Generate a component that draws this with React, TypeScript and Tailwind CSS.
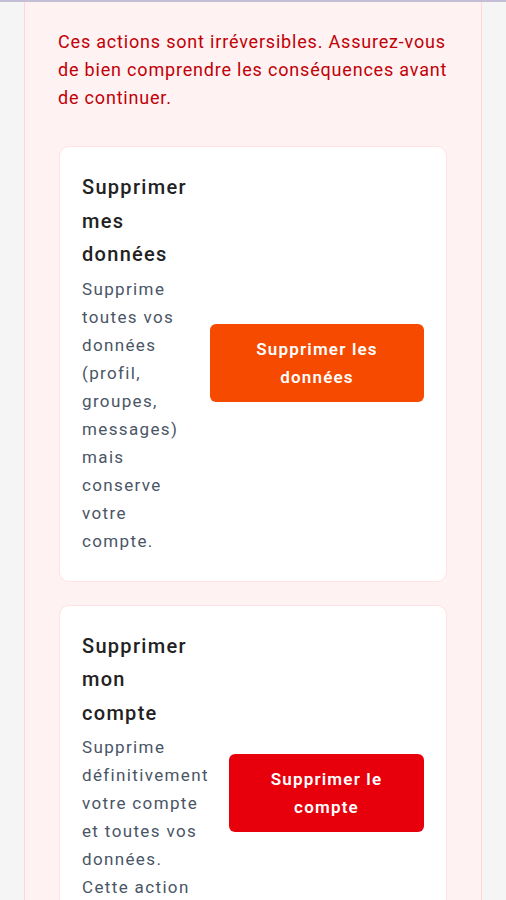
const cards = [
  {
    title: 'Supprimer mes données',
    desc: 'Supprime toutes vos données (profil, groupes, messages) mais conserve votre compte.',
    label: 'Supprimer les données',
    btn: 'w-[214px] bg-[#f54a00]',
  },
  {
    title: 'Supprimer mon compte',
    desc: 'Supprime définitivement votre compte et toutes vos données. Cette action est irréversible.',
    label: 'Supprimer le compte',
    btn: 'w-[195px] bg-[#e7000b]',
  },
];

export default function App() {
  return (
    <div className="min-h-screen bg-[#f5f5f5] font-['Roboto',sans-serif]">
      <div className="h-[2px] bg-[#c4bdd6]" />
      <div className="mx-6 border-x border-b border-[#ffd6d9] bg-[#fef2f2] px-[34px] pt-[26px] pb-8">
        <p className="-mx-px text-[18px] leading-[28px] tracking-[0.045em] text-[#c10007]">
          Ces actions sont irréversibles. Assurez-vous de bien comprendre les conséquences avant de continuer.
        </p>
        <div className="mt-[34px] flex flex-col gap-[23px]">
          {cards.map((c) => (
            <div key={c.title} className="flex items-center gap-5 rounded-[10px] border border-[#ffe2e4] bg-white px-[22px] pt-6 pb-[26px]">
              <div className="min-w-0 flex-1">
                <h3 className="max-w-[118px] text-[20px] leading-[33.5px] font-medium tracking-[0.065em] text-[#222]">{c.title}</h3>
                <p className="mt-[3px] text-[17px] leading-[28px] tracking-[0.08em] text-[#4a5565]">{c.desc}</p>
              </div>
              <button className={`${c.btn} shrink-0 rounded-md px-6 py-[11px] text-[17px] leading-[28px] font-semibold tracking-[0.07em] text-white`}>
                {c.label}
              </button>
            </div>
          ))}
        </div>
      </div>
    </div>
  );
}
